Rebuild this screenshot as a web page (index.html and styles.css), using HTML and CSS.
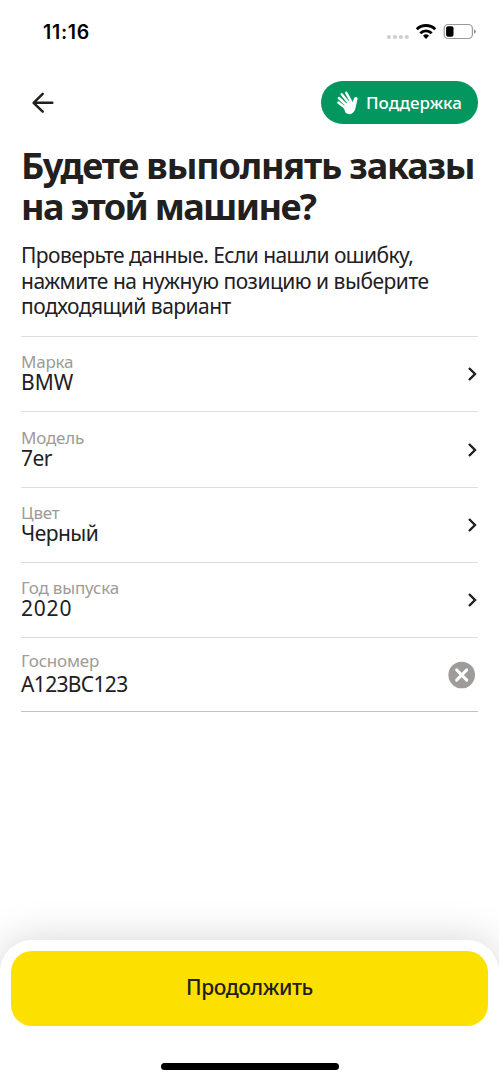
FILE: index.html
```html
<!DOCTYPE html>
<html lang="ru">
<head>
<meta charset="utf-8">
<title>Проверка машины</title>
<link rel="stylesheet" href="styles.css">
</head>
<body>
<div class="screen">
  <div class="status">
    <span class="time">11:16</span>
    <svg class="status-icons" width="90" height="20" viewBox="386 22 90 20">
      <g fill="#cfcfcf"><circle cx="388.9" cy="37" r="2.1"/><circle cx="394.9" cy="37" r="2.1"/><circle cx="400.9" cy="37" r="2.1"/><circle cx="406.8" cy="37" r="2.1"/></g>
      <g fill="none" stroke="#000" stroke-width="2.9"><path d="M416.8 29.3a13.2 13.2 0 0 1 18.4 0"/><path d="M420.3 33.2a8.2 8.2 0 0 1 11.4 0"/></g>
      <path d="M426 38.9l-3-3.2a4.3 4.3 0 0 1 6 0z"/>
      <rect x="444.2" y="24.5" width="28.2" height="14" rx="4" fill="none" stroke="#999" stroke-width="1.2"/>
      <rect x="446.1" y="26.3" width="7.4" height="10.4" rx="2"/>
      <path d="M474 29.2q1.8.8 1.8 2.3t-1.8 2.3z" fill="#888"/>
    </svg>
  </div>
  <header class="toolbar">
    <svg class="back" width="24" height="24" viewBox="31 91 24 24" fill="none" stroke="#21201f" stroke-width="2.5" stroke-linecap="round" stroke-linejoin="round"><path d="M52.3 102.8H33.8M42.7 93.9L33.6 102.8l9.1 8.9"/></svg>
    <div class="support">
      <svg width="24" height="24" viewBox="336 91 24 24"><g fill="none" stroke="#fff" stroke-width="2.5" stroke-linecap="round"><path d="M338.4 102.6l7 5.5M338.9 98l8 7.5M341.7 94.3l7.3 9M346.3 92.9l5.2 9.5"/></g><path fill="#fff" d="M343.5 106.5l5.5-5.6 3.6 1.2 1.6-4q.9-1.6 2.5-.9 1.2.6.8 2.1l-1.6 6.9q-.8 5.2-3.9 7.3-3.8 1.8-6.8-1.2z"/></svg>
      <span>Поддержка</span>
    </div>
  </header>
  <h1><span class="t1">Будете выполнять заказы</span><br><span class="t2">на этой машине?</span></h1>
  <p class="intro"><span class="p1">Проверьте данные. Если нашли ошибку,</span><br><span class="p2">нажмите на нужную позицию и выберите</span><br><span class="p3">подходящий вариант</span></p>
  <div class="list">
    <div class="row"><div><div class="label">Марка</div><div class="value v1">BMW</div></div><svg class="chev" width="12" height="16" viewBox="0 0 12 16"><path d="M3 2l6 6-6 6"/></svg></div>
    <div class="row"><div><div class="label">Модель</div><div class="value v2">7er</div></div><svg class="chev" width="12" height="16" viewBox="0 0 12 16"><path d="M3 2l6 6-6 6"/></svg></div>
    <div class="row"><div><div class="label">Цвет</div><div class="value v3">Черный</div></div><svg class="chev" width="12" height="16" viewBox="0 0 12 16"><path d="M3 2l6 6-6 6"/></svg></div>
    <div class="row"><div><div class="label">Год выпуска</div><div class="value v4">2020</div></div><svg class="chev" width="12" height="16" viewBox="0 0 12 16"><path d="M3 2l6 6-6 6"/></svg></div>
    <div class="row plate"><div><div class="label">Госномер</div><div class="value v5">A123BC123</div></div><svg class="clear" width="28" height="28" viewBox="0 0 28 28"><circle cx="13.7" cy="14" r="13.3" fill="#9e9b98"/><path d="M8.6 8.9l10.2 10.2M18.8 8.9L8.6 19.1" stroke="#fff" stroke-width="2.9" stroke-linecap="round"/></svg></div>
  </div>
  <footer class="sheet">
    <div class="button"><span>Продолжить</span></div>
    <div class="home"></div>
  </footer>
</div>
</body>
</html>
```

FILE: styles.css
```css
* { box-sizing: border-box; }
body { margin: 0; background: #fff; font-family: "Noto Sans", sans-serif; color: #21201f; }
.screen { width: 499px; height: 1080px; overflow: hidden; display: flex; flex-direction: column; }
.status { height: 64px; padding: 0 23px 0 43px; display: flex; justify-content: space-between; align-items: center; flex: none; }
.time { font: 600 19.5px/24px Inter, sans-serif; letter-spacing: .7px; color: #000; }
.toolbar { height: 78px; padding: 17px 21px 0 31px; display: flex; justify-content: space-between; align-items: flex-start; flex: none; }
.back { margin-top: 10px; }
.support { width: 157px; height: 43px; border-radius: 22px; background: #04965f; color: #fff; display: flex; align-items: center; gap: 6px; padding-left: 15px; font-size: 17px; font-weight: 500; white-space: nowrap; }
h1 { margin: 3px 0 0 21px; font-size: 36px; line-height: 41px; font-weight: 700; white-space: nowrap; }
.t1 { letter-spacing: -1.17px; }
.t2 { letter-spacing: -1.62px; }
.intro { margin: 16px 0 0 21px; font-size: 21px; line-height: 25.6px; white-space: nowrap; }
.p1 { letter-spacing: -.57px; }
.p2 { letter-spacing: -.49px; }
.p3 { letter-spacing: -.52px; }
.list { margin: 16.3px 21px 0; border-top: 1px solid #dededd; }
.row { height: 75.3px; padding-top: 15.2px; border-bottom: 1px solid #dededd; display: flex; justify-content: space-between; }
.label { font-size: 17px; line-height: 20px; letter-spacing: -.2px; color: #9e9b98; }
.value { font-size: 21px; line-height: 21px; }
.v2 { letter-spacing: -.5px; }
.v3 { letter-spacing: -.5px; }
.v4 { letter-spacing: .8px; }
.v5 { letter-spacing: -.65px; }
.chev { margin-top: 14px; fill: none; stroke: #21201f; stroke-width: 2.4; }
.plate { height: 74px; padding-top: 12.6px; border-bottom-color: #c4c2c0; }
.plate .value { margin-top: 3px; }
.clear { margin: 10px 2px 0 0; }
.sheet { margin-top: auto; height: 140px; padding: 11px 11px 0; border-radius: 32px 32px 0 0; background: #fff; box-shadow: 0 0 40px rgba(0, 0, 0, .17); flex: none; }
.button { height: 75px; padding-bottom: 4px; border-radius: 21px; background: #fce000; display: flex; align-items: center; justify-content: center; font-size: 21px; font-weight: 500; letter-spacing: -.4px; }
.home { width: 178px; height: 7px; border-radius: 4px; background: #000; margin: 37px auto 0; }
```
